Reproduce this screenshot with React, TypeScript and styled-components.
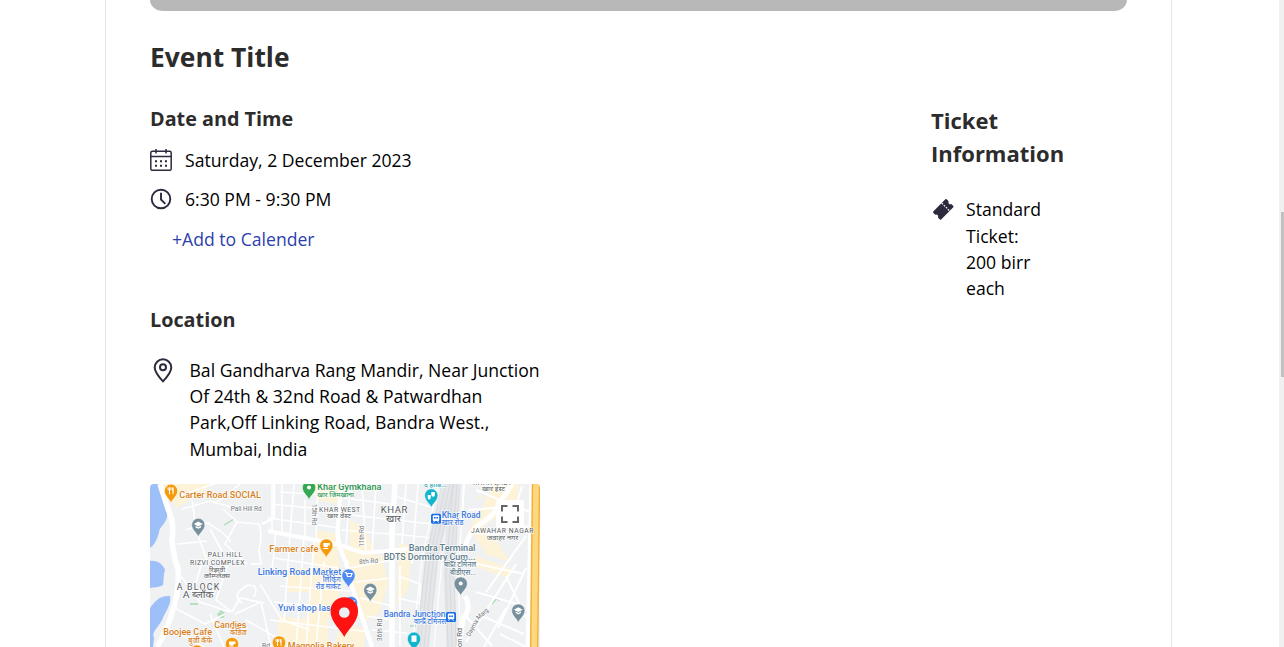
import React from 'react';
import styled, { createGlobalStyle } from 'styled-components';

const GlobalStyle = createGlobalStyle`
  *, *::before, *::after { box-sizing: border-box; }
  body { margin: 0; background: #fff; overflow: hidden; }
  h1, h2, h3, p { margin: 0; }
`;

const Page = styled.div`
  display: flex;
  width: 1284px;
  height: 647px;
  overflow: hidden;
  background: #fff;
  color: #000;
  font-family: 'Open Sans', 'Noto Sans', sans-serif;
  font-size: 17.6px;
  line-height: 26.4px;
`;

const Card = styled.main`
  width: 1067px;
  height: 647px;
  margin-left: 105px;
  padding: 0 44px;
  border-left: 1px solid #e6e6e6;
  border-right: 1px solid #e6e6e6;
`;

const Banner = styled.div`
  height: 11px;
  background: #b8b8b8;
  border-radius: 0 0 13px 13px / 0 0 11px 11px;
`;

const Title = styled.h1`
  margin-top: 26px;
  font-size: 26.4px;
  line-height: 40px;
  font-weight: 700;
  color: #2d2c2c;
`;

const Columns = styled.div`
  display: flex;
  justify-content: space-between;
  margin-top: 27px;
`;

const Details = styled.section`
  width: 400px;
`;

const Heading = styled.h2<{ $size?: number; $top?: number }>`
  margin-top: ${(p) => p.$top ?? 0}px;
  font-size: ${(p) => p.$size ?? 19.8}px;
  line-height: ${(p) => (p.$size ? 33 : 30)}px;
  font-weight: 700;
  color: #2d2c2c;
`;

const InfoRow = styled.div<{ $top: number; $gap?: number; $iconTop?: number }>`
  display: flex;
  align-items: flex-start;
  gap: ${(p) => p.$gap ?? 13}px;
  margin-top: ${(p) => p.$top}px;
  svg { flex: none; margin-top: ${(p) => p.$iconTop ?? 2}px; }
`;

const CalendarLink = styled.a`
  display: block;
  margin: 13.5px 0 0 22px;
  color: #2b3fae;
`;

const Address = styled.p`
  width: 356px;
`;

const Tickets = styled.aside`
  width: 196px;
`;

const TicketText = styled.p`
  width: 84px;
`;

const MapFrame = styled.div`
  width: 390px;
  height: 163px;
  margin-top: 21.8px;
  border-radius: 4px 4px 0 0;
  overflow: hidden;
  svg { display: block; }
`;

const ScrollTrack = styled.div`
  width: 5px;
  height: 647px;
  margin-left: auto;
  padding: 212px 0 0 2px;
  background: #f0f0f0;
`;

const ScrollThumb = styled.div`
  height: 165px;
  background: #c1c1c1;
`;

const INK = '#2d2a3e';

const CalendarIcon = () => (
  <svg width="22" height="22" viewBox="0 0 22 22" fill="none" stroke={INK} strokeWidth="1.5">
    <rect x="0.8" y="2.3" width="20.4" height="19" rx="1.6" />
    <path d="M.8 7.5h20.4M6 0v4.6M16 0v4.6" />
    <path d="M5 12.2h2M10 12.2h2M15 12.2h2M5 16.7h2M10 16.7h2M15 16.7h2" strokeWidth="2" />
  </svg>
);

const ClockIcon = () => (
  <svg width="22" height="22" viewBox="0 0 22 22" fill="none" stroke={INK} strokeWidth="1.9">
    <circle cx="11" cy="11" r="9.3" />
    <path d="M11 4.8v6.7l4.3 4.3" />
  </svg>
);

const PlaceIcon = () => (
  <svg width="26" height="26" viewBox="0 0 26 26" fill="none" stroke={INK} strokeWidth="2">
    <path d="M13 23.4C9.5 19.7 4.7 14.6 4.7 9.6a8.3 8.3 0 0 1 16.6 0c0 5-4.8 10.1-8.3 13.8Z" />
    <circle cx="13" cy="9.2" r="3" />
  </svg>
);

const TicketIcon = () => (
  <svg width="24" height="24" viewBox="0 0 24 24">
    <g transform="translate(12.2 11.3) rotate(-45) scale(.92) translate(-12.5 -11.5)">
      <path
        fill={INK}
        d="M3.2 5.5h18.6a1 1 0 0 1 1 1v3a2.2 2.2 0 0 0 0 4.2v3a1 1 0 0 1-1 1H3.2a1 1 0 0 1-1-1v-3a2.2 2.2 0 0 0 0-4.2v-3a1 1 0 0 1 1-1Z"
      />
      <path d="M16.2 5.5v12.2" stroke="#fff" strokeWidth="1.2" strokeDasharray="2 1.2" />
    </g>
  </svg>
);

type Label = [text: string, x: number, y: number, width: number, size: number, color: string, rotate?: number];

const ORANGE = '#d9811c';
const BLUE = '#3c78e0';
const SLATE = '#607d8b';
const GREY = '#565b61';
const ROAD = '#70757b';

const LABELS: Label[] = [
  ['Carter Road SOCIAL', 29.3, 13.7, 81.5, 9, ORANGE],
  ['Pali Hill Rd', 80.7, 27, 31, 6.5, ROAD],
  ['Khar Gymkhana', 167.3, 5.5, 64, 9, '#299451'],
  ['खार जिमखाना', 167.3, 12.9, 36.5, 7, '#299451'],
  ['KHAR WEST', 169, 27.8, 41, 6.8, GREY],
  ['खार वेस्ट', 177, 34, 24, 7, GREY],
  ['15th Rd', 161.5, 20, 21, 6.5, ROAD, 90],
  ['Farmer cafe', 119.3, 67.7, 49, 9, ORANGE],
  ['PALI HILL', 57.7, 73, 34.5, 6.8, GREY],
  ['RIZVI COMPLEX', 40, 81.3, 54.5, 6.8, GREY],
  ['रिझवी', 59, 87.8, 16, 7, GREY],
  ['कॉम्प्लेक्स', 54, 94.3, 26, 7, GREY],
  ['Linking Road Market', 107.7, 90.6, 83.5, 9, BLUE],
  ['लिंकिंग', 172.7, 97.5, 18, 8, BLUE],
  ['रोड मार्केट', 165.7, 104.7, 25, 8, BLUE],
  ['A BLOCK', 26.7, 105.5, 42.5, 8.8, GREY],
  ['A ब्लॉक', 32.7, 114.3, 30.7, 9, GREY],
  ['Yuvi shop las', 128, 126.5, 52.5, 9, BLUE],
  ['Candies', 64.3, 143.7, 32, 8.8, ORANGE],
  ['कॅंडिज', 80, 151, 16.7, 8, ORANGE],
  ['Boojee Cafe', 13.3, 151.3, 48.7, 9, ORANGE],
  ['बुजी कॅफे', 38.3, 158.5, 24, 8, ORANGE],
  ['Magnolia Bakery', 137.7, 165, 66.5, 9, ORANGE],
  ['Rd', 112, 164, 8, 6.5, ROAD],
  ['KHAR', 230.7, 28.7, 26.7, 9.5, GREY],
  ['खार', 236, 37.5, 15, 9, GREY],
  ['द हाबि...', 274, 2.5, 23, 7, '#1aa3ad'],
  ['KHAR EAST', 323, 1, 38.7, 6.8, GREY],
  ['खार ईस्ट', 332, 7, 23, 7, GREY],
  ['Khar Road', 291.7, 33.7, 38.7, 8.8, BLUE],
  ['खार रोड', 291.7, 41, 21.7, 8, BLUE],
  ['JAWAHAR NAGAR', 321, 48.8, 62.5, 6.8, GREY],
  ['जवाहर नगर', 336.7, 55.7, 31.5, 7, GREY],
  ['11th Rd', 214, 62.7, 21, 6.5, ROAD, -90],
  ['8th Rd', 209.3, 80, 19, 6.5, ROAD, -4],
  ['Bandra Terminal', 258.7, 66.5, 66.7, 9, SLATE],
  ['BDTS Dormitory Cum...', 233.7, 75.7, 91.7, 9, SLATE],
  ['बांद्रा टर्मिनल', 294, 83.3, 32, 8, SLATE],
  ['बीडीएस...', 300, 90.5, 26, 8, SLATE],
  ['Bandra Junction', 233.7, 132.5, 61.7, 9, BLUE],
  ['वान्द्रे टर्मिनस', 264, 139.5, 32, 8, BLUE],
  ['36th Rd', 232, 157, 22, 6.5, ROAD, -90],
  ['Dayma', 320, 153, 18, 6.5, ROAD, -62],
  ['Marg', 328.5, 136, 14, 6.5, ROAD, -42],
  ['on Rd', 311.5, 163, 19, 7, GREY, -90],
];

type GlyphName = 'fork' | 'cup' | 'cap' | 'cart' | 'dot' | 'bag' | 'masks' | 'none';

const glyphs: Record<GlyphName, React.ReactNode> = {
  none: null,
  dot: <circle r="2" fill="#fff" />,
  fork: <path d="M-1.5-3.5v7M-3-3.5v2.2q1.5 1.5 3 0v-2.2M2-3.5v7M2-3q-1 1 0 3.5" fill="none" stroke="#fff" />,
  cup: <path d="M-3-2.5h6.5v2.5h-1.5a2 2 0 0 1-2 1.8h-1a2 2 0 0 1-2-2ZM-3 2.5h5v1h-5Z" fill="#fff" />,
  cap: <path d="M-4.5-.8 0-3.3 4.5-.8 0 1.6ZM-2.7.9 0 2.4 2.7.9v1.7L0 4-2.7 2.6Z" fill="#fff" />,
  cart: <path d="M-3.8-3h1.5l1.3 4h3.5l1-3h-5.5M-1 3h.2M2.3 3h.2" fill="none" stroke="#fff" strokeWidth="1.2" />,
  bag: <path d="M-2.5-3.2h5v6.4h-5Z" fill="#fff" />,
  masks: <path d="M0-3.5h3.6v3a1.8 1.8 0 0 1-3.6 0ZM-3.6-.5h3v3a1.5 1.5 0 0 1-3 0Z" fill="#fff" />,
};

const Pin = ({ x, y, color, glyph = 'none' }: { x: number; y: number; color: string; glyph?: GlyphName }) => (
  <g transform={`translate(${x} ${y})`}>
    <path
      d="M0 12.4C-.8 8.5-6.6 5.5-6.6 0a6.6 6.6 0 0 1 13.2 0C6.6 5.5.8 8.5 0 12.4Z"
      fill={color}
      stroke="#fff"
      strokeWidth=".5"
    />
    {glyphs[glyph]}
  </g>
);

const Station = ({ x, y }: { x: number; y: number }) => (
  <g transform={`translate(${x} ${y})`}>
    <rect x="-5" y="-5" width="10" height="10" rx="1.5" fill="#1a6fe8" />
    <rect x="-3.2" y="-3.5" width="6.4" height="5.8" rx="1" fill="#fff" />
    <path d="M-2-1.6h1.7v1.5h-1.7ZM.3-1.6h1.7v1.5H.3Z" fill="#1a6fe8" />
    <path d="M-2.5 3.8l1-1.5M2.5 3.8l-1-1.5" stroke="#fff" strokeWidth=".9" />
  </g>
);

const AreaMap = () => (
  <svg width="390" height="163" viewBox="0 0 390 163" fontFamily="Roboto, 'Noto Sans', sans-serif">
    <rect width="390" height="163" fill="#eff1f3" />
    <g fill="#fdf3d8">
      <path d="M14 0h46l-5 6-28 18-11-16Z" />
      <path d="M166 46l22 4v34l-26-4ZM170 62l18 6 4 34-24 60h-18l12-58ZM190 64l42 8 6 28-8 28-18 12-10-30Z" />
      <path d="M138 84h26v24h-26ZM128 132l50 6v25h-50Z" />
      <path d="M200 66l24 3-8-25-16-8ZM249 58l12 6-2 40-12 18ZM343 0h26l-2 18-34 25 14 14 12 20-22-6-18-26 12-20ZM162 0h26v20l-20-4ZM190 140l24 4v20h-30Z" />
      <path d="M326 72l38 14-6 8-34-12ZM300 112h6v50h-6Z" />
      <circle cx="330" cy="13" r="2.5" />
    </g>
    <g fill="#9dc0f9">
      <path d="M0 0h9c-1 12 10 21 8 33-2 8-7 9-8 15-2 9-6 14-9 16Z" />
      <path d="M0 77c7-1 13 3 15 9-2 5-1 10-2 15-5 3-9 2-13 3Z" />
      <path d="M0 124c5-7 10-13 20-12 2 8-5 16-8 24-4 8-11 12-8 18l-1 9H0Z" />
    </g>
    <g fill="#b4dfc0">
      <path d="M67 130l4-4 4 3-1 5h-5ZM40 119h8v2h-8Z" />
      <path d="M74 41l10-6M342 120l5-6 2 3M260 142h6" fill="none" stroke="#a8dab5" strokeWidth="1.3" />
    </g>

    <g fill="none" stroke="#fff" strokeWidth="1.6">
      <path d="M28 12l36-12M32 25l28-8 28 8M87 38l-14-13M87 38l22 2q4 12 0 26l2 14h-10M87 38l-12 22 22 20M36 46l22-7 14 9 9 10M42 15l4 30 12 35M60 45l12 22M27 60l30-3M64 20l26-20" />
      <path d="M28 88l22 30 30 10M52 78l-8 28M78 80l-12 36 16 12 8-14 24 5M92 119q-12-8 6-18 12 0 6 12M25 124l30 16 20-10M85 130l26-12 10 45M60 130l14 33M14 142l40 21M96 136l42 24M110 100l22 36 28 10" />
      <path d="M122 0v46M132 0v50M144 0l-4 52M155 16v40M168 0l-2 55M122 20l58 6M118 34l72 10M130 8l60 4M126 48l-4 38M140 50l-6 88M154 54l-8 109M164 56l-8 107M174 78l-8 85M124 74l64 10M130 102l70 5M124 118l84 8M120 136l100 12" />
      <path d="M200 0l-4 62M212 0l4 70M226 0l-4 68M194 14l46 6M192 30l90 10M192 46l48 4M256 0l-4 60M268 0l-6 80M244 12l40 12M244 50l38 4M200 84l42-8M206 98l36-4M210 114l32 8M216 132l26 4M222 146l46 4M248 92l22 8v60M248 114l26 6M250 82v80" />
    </g>
    <g fill="none" stroke="#fff" strokeWidth="2">
      <path d="M314 0l-2 38M326 6l54 22M318 26l52-4M320 48q28 6 58-6M318 78l56 12M366 80l-50 78M356 92l20 42M376 84l-28 60M326 108l48 14M332 132l42 18M316 132l26 30M356 124l-22 39M376 52l-40 56M372 2l-12 40M350 150l26 13" />
    </g>

    <g fill="none" strokeLinecap="butt">
      <path d="M300 0L282 70 272 163" stroke="#e4e6e9" strokeWidth="13" />
      <path d="M304 0L299 90 302 163" stroke="#e4e6e9" strokeWidth="11" />
      <g stroke="#d2d5d9" strokeWidth=".7">
        <path d="M292 0L276 75 266 163M296 0L280 72 270 163M300 0L284 70 274 163M304 0L288 70 278 163M303 0L296 90 298 163M307 0L300 90 302 163M310 0L304 90 306 163" />
      </g>
      <path d="M288 0L272 75 262 163M292 75L284 163M314 0L308 92 311 163" stroke="#fff" strokeWidth="1.2" />
    </g>

    <g fill="none" stroke="#fff">
      <path d="M10 0l8 25q7 16 4 30 1 16 6 30 2 22-7 47-4 14-14 31" strokeWidth="5.5" />
      <path d="M245 0l-3 46v117" strokeWidth="5.5" />
      <path d="M191 0l-3 40q-2 20 8 38l6 25 20 60" strokeWidth="4.5" />
      <path d="M118 47l68 13 28 9 44-4" strokeWidth="4" />
      <path d="M362 0l-13 20q-5 12-19 20-12 8-15 25M315 112q7 12-2 23l-4 28" strokeWidth="5" />
      <path d="M112 40l12-6v-34" strokeWidth="2.5" />
    </g>
    <path d="M386 0l-4 163" stroke="#fff" strokeWidth="13" />
    <path d="M386 0l-1.800 163" stroke="#f2b142" strokeWidth="8.6" />
    <path d="M386 0l-1.800 163" stroke="#fdd87c" strokeWidth="5.6" />

    <Pin x={201} y={119} color="#4f8bf3" glyph="cart" />
    {LABELS.map(([text, x, y, width, size, color, rotate = 0]) => (
      <text
        key={`${text}-${x}`}
        transform={`translate(${x} ${y}) rotate(${rotate})`}
        fontSize={size}
        fontWeight={color === GREY || size < 7 ? 400 : 500}
        fill={color}
        stroke="#fff"
        strokeWidth="1.5"
        strokeOpacity=".8"
        paintOrder="stroke"
        textLength={width}
        lengthAdjust={color === GREY && /^[A-Z ]+$/.test(text) ? 'spacing' : 'spacingAndGlyphs'}
      >
        {text}
      </text>
    ))}

    <Pin x={21} y={6.8} color="#f49a0b" glyph="fork" />
    <Pin x={159} y={3.5} color="#34a853" glyph="dot" />
    <Pin x={48.3} y={40.8} color="#78909c" glyph="cap" />
    <Pin x={176.3} y={61.5} color="#f49a0b" glyph="cup" />
    <Pin x={198.5} y={91.5} color="#4f8bf3" glyph="cart" />
    <Pin x={220.3} y={105.8} color="#78909c" glyph="cap" />
    <Pin x={281.3} y={11.4} color="#12b5cb" glyph="masks" />
    <Pin x={310.7} y={99.5} color="#78909c" glyph="dot" />
    <Pin x={368.3} y={126.5} color="#78909c" glyph="cap" />
    <Pin x={264} y={154.7} color="#12b5cb" glyph="bag" />
    <Pin x={82} y={160} color="#f49a0b" glyph="cup" />
    <Pin x={129} y={158.5} color="#f49a0b" glyph="fork" />
    <Pin x={47} y={167.5} color="#f49a0b" />
    <Station x={286} y={34.7} />
    <Station x={301} y={133} />

    <path
      d="M194.3 153C191 146 180.5 138 180.5 127a13.8 13.8 0 0 1 27.6 0c0 11-10.5 19-13.8 26Z"
      fill="#ff1212"
    />
    <circle cx="194.3" cy="128.5" r="5.3" fill="#e9eff5" />

    <rect x="346" y="16" width="28" height="28" rx="1.5" fill="#fff" />
    <path d="M352 27.5v-5.5h5.5M362.5 22h5.5v5.5M368 32.5v5.5h-5.5M357.5 38h-5.5v-5.5" fill="none" stroke="#666" strokeWidth="2" />
  </svg>
);

export default function App() {
  return (
    <Page>
      <GlobalStyle />
      <Card>
        <Banner />
        <Title>Event Title</Title>
        <Columns>
          <Details>
            <Heading>Date and Time</Heading>
            <InfoRow $top={13}>
              <CalendarIcon />
              <p>Saturday, 2 December 2023</p>
            </InfoRow>
            <InfoRow $top={12.6}>
              <ClockIcon />
              <p>6:30 PM - 9:30 PM</p>
            </InfoRow>
            <CalendarLink>+Add to Calender</CalendarLink>
            <Heading $top={52.6}>Location</Heading>
            <InfoRow $top={21.7} $gap={13.5} $iconTop={1}>
              <PlaceIcon />
              <Address>
                Bal Gandharva Rang Mandir, Near Junction Of 24th &amp; 32nd Road &amp; Patwardhan Park,Off Linking
                Road, Bandra West., Mumbai, India
              </Address>
            </InfoRow>
            <MapFrame>
              <AreaMap />
            </MapFrame>
          </Details>
          <Tickets>
            <Heading $size={22}>
              Ticket
              <br />
              Information
            </Heading>
            <InfoRow $top={26.2} $gap={11}>
              <TicketIcon />
              <TicketText>Standard Ticket:<br />200 birr each</TicketText>
            </InfoRow>
          </Tickets>
        </Columns>
      </Card>
      <ScrollTrack>
        <ScrollThumb />
      </ScrollTrack>
    </Page>
  );
}
